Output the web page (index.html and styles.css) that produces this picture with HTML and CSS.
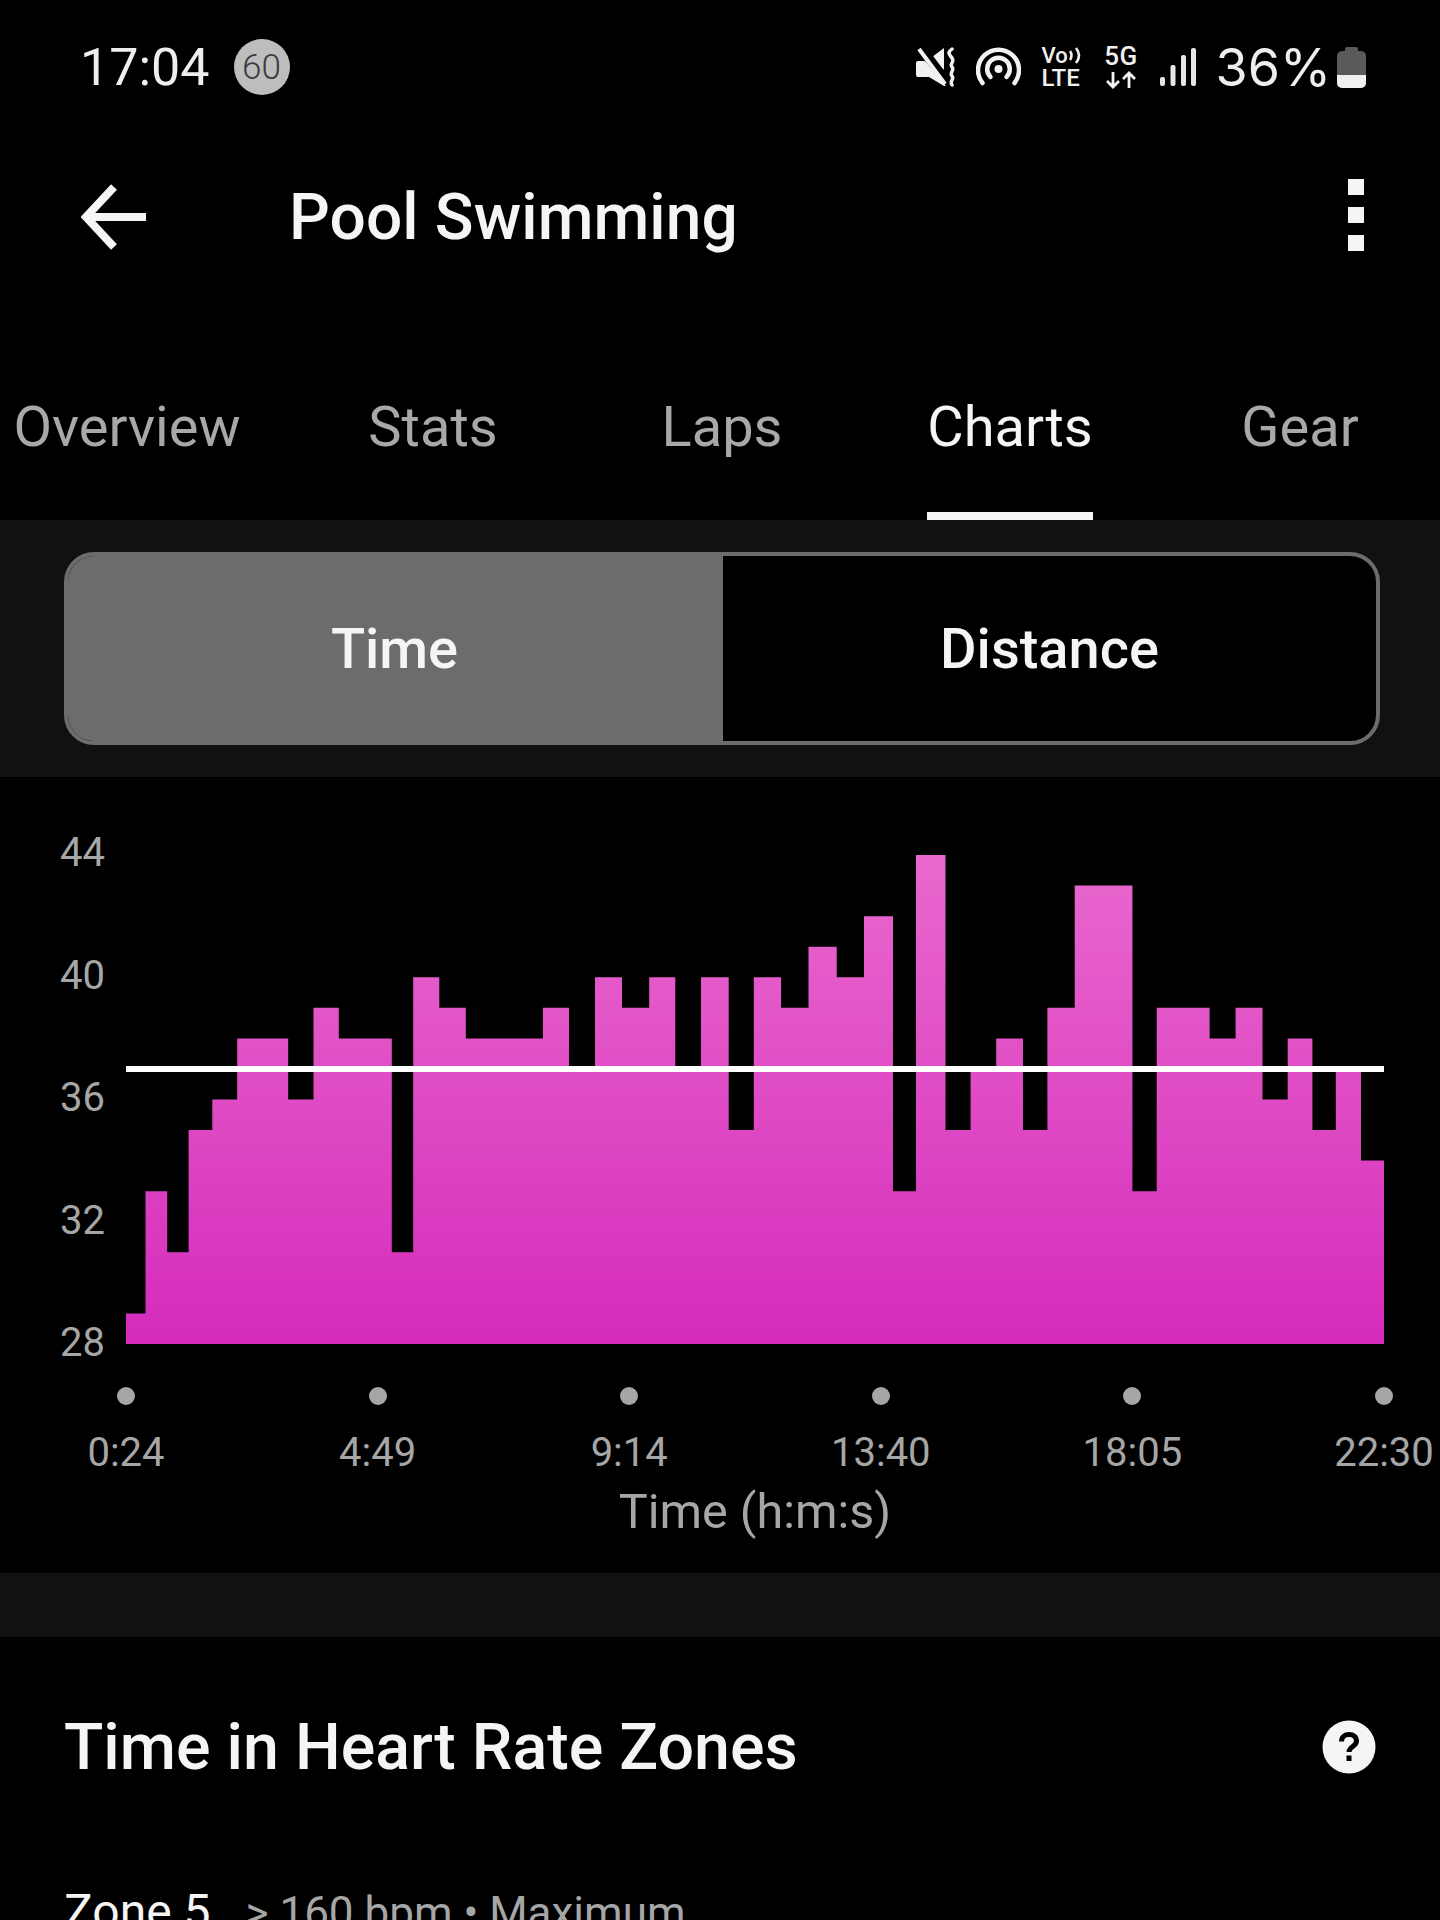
FILE: index.html
```html
<!DOCTYPE html>
<html lang="en">
<head>
    <meta charset="UTF-8">
    <meta name="viewport" content="width=device-width, initial-scale=1.0">
    <title>Pool Swimming</title>
    <link rel="stylesheet" href="styles.css">
</head>
<body>

<div class="screen">
    <!-- Status bar -->
    <div class="status-bar">
        <span class="clock">17:04</span>
        <span class="refresh-badge">60</span>
        <div class="status-icons">
            <svg class="icon-mute" width="40" height="40" viewBox="0 0 40 40">
                <path d="M2 14h7l21 25h-2L13 30H2a2 2 0 0 1-2-2V16a2 2 0 0 1 2-2z" fill="#f2f2f2"/>
                <path d="M16 10l12-9v22z" fill="#f2f2f2"/>
                <path d="M3 2l27 36" stroke="#000" stroke-width="7" fill="none" transform="translate(3 -2)"/>
                <path d="M3 2l26 35" stroke="#f2f2f2" stroke-width="4" fill="none"/>
                <path d="M36 2c-5 4-3 5 0 9s-3 6 0 9-3 6 0 9-3 5 0 9" stroke="#f2f2f2" stroke-width="3.500" fill="none" stroke-linecap="round"/>
            </svg>
            <svg class="icon-hotspot" width="45" height="40" viewBox="0 0 45 40">
                <path d="M6.500 36A20.500 20.500 0 1 1 38.500 36" stroke="#f2f2f2" stroke-width="4.500" fill="none" stroke-linecap="round"/>
                <path d="M14.500 30A11.300 11.300 0 1 1 30.500 30" stroke="#f2f2f2" stroke-width="4.500" fill="none" stroke-linecap="round"/>
                <circle cx="22.500" cy="22" r="4" fill="#f2f2f2"/>
            </svg>
            <div class="net-tag volte">
                <div class="volte-top">
                    <span>Vo</span>
                    <svg width="13" height="17" viewBox="0 0 13 17">
                        <path d="M1 4c2 3 2 6 0 9M7 1c4 5 4 10 0 15" stroke="#f0f0f0" stroke-width="2.600" fill="none"/>
                    </svg>
                </div>
                <span>LTE</span>
            </div>
            <div class="net-tag five-g">
                <span>5G</span>
                <svg width="32" height="18" viewBox="0 0 32 18">
                    <path d="M8 1v15M2 10l6 6 6-6M24 17V2M18 8l6-6 6 6" stroke="#f2f2f2" stroke-width="2.800" fill="none"/>
                </svg>
            </div>
            <svg class="icon-signal" width="36" height="40" viewBox="0 0 36 40">
                <rect x="0" y="30" width="5" height="9" rx="2" fill="#e6e6e6"/>
                <rect x="10.500" y="18" width="5" height="21" rx="2" fill="#e6e6e6"/>
                <rect x="21" y="8" width="5" height="31" rx="2" fill="#e6e6e6"/>
                <rect x="31" y="1" width="5" height="38" rx="2" fill="#e6e6e6"/>
            </svg>
            <span class="battery-text">36%</span>
            <div class="battery"><div class="battery-level"></div></div>
        </div>
    </div>

    <!-- App bar -->
    <div class="app-bar">
        <svg class="back-arrow" width="66" height="66" viewBox="0 0 66 66">
            <path d="M65 33H6M33 3L5 33l28 30" stroke="#f5f5f5" stroke-width="8" fill="none"/>
        </svg>
        <div class="app-title">Pool Swimming</div>
        <div class="kebab"><i></i><i></i><i></i></div>
    </div>

    <!-- Tabs -->
    <div class="tabs">
        <div class="tab"><span>Overview</span></div>
        <div class="tab"><span>Stats</span></div>
        <div class="tab"><span>Laps</span></div>
        <div class="tab tab-active"><span>Charts</span></div>
        <div class="tab"><span>Gear</span></div>
    </div>

    <!-- Time / Distance toggle -->
    <div class="toggle-band">
        <div class="toggle">
            <div class="toggle-option toggle-on">Time</div>
            <div class="toggle-option">Distance</div>
        </div>
    </div>

    <!-- Chart -->
    <div class="chart-card">
        <div class="chart-row">
            <div class="y-axis">
                <span>44</span>
                <span>40</span>
                <span>36</span>
                <span>32</span>
                <span>28</span>
            </div>
            <svg class="plot" width="1258" height="489" viewBox="126 855 1258 489">
                <defs>
                    <linearGradient id="pace" x1="0" y1="855" x2="0" y2="1344" gradientUnits="userSpaceOnUse">
                        <stop offset="0" stop-color="#e968ce"/>
                        <stop offset="0.5" stop-color="#df4bc4"/>
                        <stop offset="1" stop-color="#d52bbc"/>
                    </linearGradient>
                </defs>
                <path fill="url(#pace)" d="M126 1344V1313.400H145.500V1191.200H167.200V1252.300H188.600V1130.100H212.300V1099.500H237.200V1038.400H288.200V1099.500H313.500V1007.800H338.800V1038.400H391.800V1252.300H413.200V977.300H439.300V1007.800H465.800V1038.400H542.900V1007.800H569V1069H595V977.300H622V1007.800H649.200V977.300H675.300V1069H701V977.300H728.700V1130.100H753.800V977.300H781.100V1007.800H808.500V946.700H836.700V977.300H864V916.200H893V1191.200H916V855H945.500V1130.100H970.600V1069H996.200V1038.400H1023V1130.100H1047.400V1007.800H1074.700V885.600H1132.400V1191.200H1156.700V1007.800H1209.600V1038.400H1235.600V1007.800H1262.500V1099.500H1287.700V1038.400H1312.400V1130.100H1335.800V1069H1361V1160.600H1384V1344Z"/>
                <rect x="126" y="1066" width="1258" height="6" fill="#fff"/>
            </svg>
        </div>
        <div class="x-axis">
            <div class="tick"><i></i><span>0:24</span></div>
            <div class="tick"><i></i><span>4:49</span></div>
            <div class="tick"><i></i><span>9:14</span></div>
            <div class="tick"><i></i><span>13:40</span></div>
            <div class="tick"><i></i><span>18:05</span></div>
            <div class="tick"><i></i><span>22:30</span></div>
        </div>
        <div class="x-title">Time (h:m:s)</div>
    </div>

    <div class="spacer-band"></div>

    <!-- Heart rate zones -->
    <div class="zones">
        <div class="zones-head">
            <div class="zones-title">Time in Heart Rate Zones</div>
            <svg class="help-icon" width="54" height="54" viewBox="0 0 54 54">
                <circle cx="27" cy="27" r="26.500" fill="#f5f5f5"/>
                <path d="M19.500 21.500c0-4.500 3.200-7 7.500-7s7.500 2.500 7.500 6.500c0 5.500-7.500 5.500-7.500 11" stroke="#000" stroke-width="5" fill="none"/>
                <rect x="24.500" y="35.500" width="5" height="5.500" fill="#000"/>
            </svg>
        </div>
        <div class="zone-row">
            <span class="zone-name">Zone 5</span>
            <span class="zone-range">&gt; 160 bpm • Maximum</span>
        </div>
    </div>
</div>

</body>
</html>
```

FILE: styles.css
```css
html, body {
    margin: 0;
    padding: 0;
    background-color: #000;
}

body {
    font-family: 'Roboto', 'Liberation Sans', sans-serif;
    color: #f5f5f5;
}

.screen {
    width: 1440px;
    height: 1920px;
    overflow: hidden;
    background-color: #000;
}

/* Status bar */
.status-bar {
    height: 134px;
    display: flex;
    align-items: center;
    padding: 0 74px 0 80px;
    box-sizing: border-box;
}

.clock {
    font-size: 52px;
    font-weight: 400;
    color: #eee;
}

.refresh-badge {
    width: 56px;
    height: 56px;
    margin-left: 24px;
    border-radius: 50%;
    background-color: #bdbdbd;
    color: #3c3c3c;
    font-size: 35px;
    font-weight: 300;
    display: flex;
    align-items: center;
    justify-content: center;
}

.status-icons {
    margin-left: auto;
    display: flex;
    align-items: center;
}

.icon-mute {
    margin-right: 20px;
}

.icon-hotspot {
    margin-right: 21px;
}

.net-tag {
    display: flex;
    flex-direction: column;
    font-size: 24px;
    line-height: 23px;
    font-weight: 500;
    color: #f0f0f0;
}

.volte {
    width: 41px;
    margin-right: 23px;
}

.volte-top {
    display: flex;
    align-items: center;
    font-size: 22px;
}

.volte-top svg {
    flex: none;
    margin-left: 1px;
}

.five-g {
    width: 31px;
    margin-right: 23px;
    align-items: center;
    font-size: 26px;
    line-height: 20px;
    letter-spacing: 0.500px;
}

.five-g svg {
    margin-top: 5px;
}

.icon-signal {
    margin-right: 20px;
}

.battery-text {
    font-family: 'Inter', 'Roboto', sans-serif;
    font-size: 52px;
    font-weight: 400;
    color: #eee;
    margin-right: 6px;
}

.battery {
    width: 29px;
    height: 37px;
    margin-top: 4px;
    border-radius: 5px;
    background-color: #5a5a5a;
    position: relative;
    display: flex;
    align-items: flex-end;
}

.battery::before {
    content: "";
    position: absolute;
    top: -4px;
    left: 8px;
    width: 13px;
    height: 5px;
    border-radius: 2px 2px 0 0;
    background-color: #5a5a5a;
}

.battery-level {
    width: 100%;
    height: 13px;
    border-radius: 0 0 5px 5px;
    background-color: #f0f0f0;
}

/* App bar */
.app-bar {
    height: 164px;
    display: flex;
    align-items: center;
    padding: 2px 76px 0 81px;
    box-sizing: border-box;
}

.back-arrow {
    flex: none;
}

.app-title {
    margin-left: 142px;
    font-size: 64px;
    font-weight: 500;
    letter-spacing: 0.100px;
    color: #f5f5f5;
}

.kebab {
    margin-left: auto;
    margin-top: -4px;
    display: flex;
    flex-direction: column;
    gap: 12px;
}

.kebab i {
    display: block;
    width: 16px;
    height: 16px;
    background-color: #f5f5f5;
}

/* Tabs */
.tabs {
    height: 222px;
    display: grid;
    grid-template-columns: 254px 358px 220px 356px 224px;
    align-items: end;
    justify-items: center;
}

.tab {
    font-size: 56px;
    color: #a8a8a8;
    line-height: 64px;
}

.tab span {
    display: block;
    padding-bottom: 53px;
    border-bottom: 8px solid transparent;
}

.tab-active {
    color: #f5f5f5;
}

.tab-active span {
    border-bottom-color: #f5f5f5;
}

/* Toggle */
.toggle-band {
    background-color: #111;
    height: 257px;
    padding: 32px 60px 0 64px;
    box-sizing: border-box;
}

.toggle {
    height: 193px;
    display: flex;
    box-sizing: border-box;
    border: 4px solid #6c6c6c;
    border-radius: 30px;
    background: linear-gradient(90deg, #6c6c6c 655px, #000 655px) padding-box;
}

.toggle-option {
    flex: 1;
    display: flex;
    align-items: center;
    justify-content: center;
    font-size: 56px;
    font-weight: 500;
    color: #f5f5f5;
}

.toggle-on {
    flex: none;
    width: 653px;
    padding-right: 2px;
}

/* Chart */
.chart-card {
    height: 796px;
    box-sizing: border-box;
    padding-top: 78px;
    color: #a6a6a6;
}

.chart-row {
    display: flex;
    align-items: flex-start;
}

.y-axis {
    width: 105px;
    margin-right: 21px;
    height: 538px;
    margin-top: -26px;
    display: flex;
    flex-direction: column;
    justify-content: space-between;
    align-items: flex-end;
    font-size: 40px;
    line-height: 48px;
}

.plot {
    display: block;
}

.x-axis {
    margin: 20px 56px 0 126px;
    display: flex;
    justify-content: space-between;
}

.tick {
    width: 0;
    display: flex;
    flex-direction: column;
    align-items: center;
    font-size: 40px;
    line-height: 48px;
    white-space: nowrap;
}

.tick i {
    display: block;
    flex: none;
    width: 18px;
    height: 18px;
    border-radius: 50%;
    background-color: #a6a6a6;
    margin-bottom: 24px;
}

.x-title {
    margin: 8px 0 0 510px;
    width: 490px;
    text-align: center;
    font-size: 48.500px;
    line-height: 54px;
}

.spacer-band {
    height: 64px;
    background-color: #111;
}

/* Zones */
.zones {
    padding: 0 64px 0 64px;
}

.zones-head {
    display: flex;
    align-items: center;
    justify-content: space-between;
    padding: 73px 0 0 0;
}

.zones-title {
    font-size: 64.500px;
    line-height: 74px;
    font-weight: 500;
    color: #f5f5f5;
}

.zone-row {
    margin-top: 98px;
    display: flex;
    align-items: baseline;
    gap: 35px;
    line-height: 60px;
}

.zone-name {
    font-size: 48px;
    color: #f5f5f5;
}

.zone-range {
    font-size: 44px;
    color: #a6a6a6;
}
```
